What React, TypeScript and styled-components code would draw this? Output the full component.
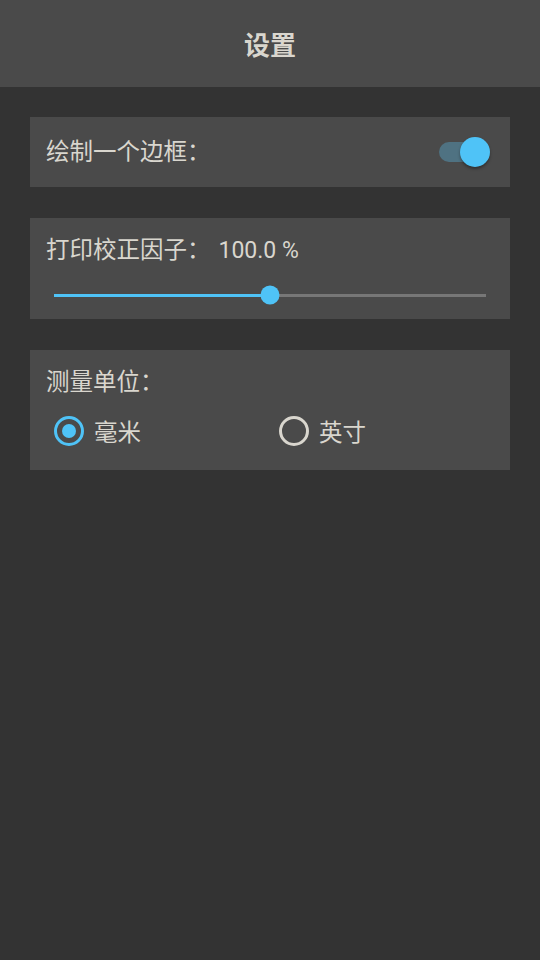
import styled, { createGlobalStyle } from 'styled-components';

const GlobalStyle = createGlobalStyle`
  html, body {
    margin: 0;
    padding: 0;
    background: #333333;
  }
  body {
    font-family: Roboto, "Noto Sans CJK SC", sans-serif;
    color: #d9d6ce;
  }
`;

const Page = styled.div`
  width: 540px;
  min-height: 960px;
  background: #333333;
`;

const Header = styled.header`
  height: 87px;
  background: #4a4a4a;
  display: flex;
  align-items: center;
  justify-content: center;
`;

const Title = styled.h1`
  margin: 0;
  font-size: 26px;
  font-weight: 700;
  color: #d9d6ce;
`;

const Content = styled.main`
  display: flex;
  flex-direction: column;
  gap: 31px;
  padding: 30px 30px;
`;

const Card = styled.section<{ $height: number }>`
  background: #4a4a4a;
  height: ${(p) => p.$height}px;
  box-sizing: border-box;
  padding: 0 16px;
  display: flex;
  flex-direction: column;
`;

const Row = styled.div`
  display: flex;
  align-items: center;
  justify-content: space-between;
  height: 100%;
`;

const Label = styled.span`
  font-size: 23.5px;
  line-height: 30px;
  color: #d9d6ce;
`;

const Value = styled.span`
  font-size: 23px;
  margin-left: 8px;
`;

const Switch = styled.div`
  position: relative;
  width: 51px;
  height: 30px;
  margin-right: 4px;
`;

const Track = styled.div`
  position: absolute;
  left: 0;
  top: 5px;
  width: 42px;
  height: 20px;
  border-radius: 10px;
  background: #4f7282;
`;

const Thumb = styled.div`
  position: absolute;
  right: 0;
  top: 0;
  width: 30px;
  height: 30px;
  border-radius: 50%;
  background: #4fc3f7;
  box-shadow: 0 2px 3px rgba(0, 0, 0, 0.35);
`;

const SliderWrap = styled.div`
  position: relative;
  height: 20px;
  margin: 19px 8px 0 8px;
  display: flex;
  align-items: center;
`;

const SliderTrack = styled.div`
  width: 100%;
  height: 3px;
  background: #777777;
  position: relative;
`;

const SliderFill = styled.div`
  position: absolute;
  left: 0;
  top: 0;
  height: 3px;
  background: #4fc3f7;
`;

const SliderKnob = styled.div`
  position: absolute;
  top: 50%;
  width: 19px;
  height: 19px;
  border-radius: 50%;
  background: #4fc3f7;
  transform: translate(-50%, -50%);
`;

const RadioGroup = styled.div`
  display: flex;
  margin: 17px 0 0 8px;
`;

const RadioOption = styled.label`
  display: flex;
  align-items: center;
  gap: 10px;
  flex: 0 0 225px;
  font-size: 23.5px;
`;

const RadioCircle = styled.span<{ $checked?: boolean }>`
  box-sizing: border-box;
  width: 30px;
  height: 30px;
  border-radius: 50%;
  border: 3px solid ${(p) => (p.$checked ? '#4fc3f7' : '#d9d6ce')};
  display: flex;
  align-items: center;
  justify-content: center;

  &::after {
    content: '';
    display: ${(p) => (p.$checked ? 'block' : 'none')};
    width: 14px;
    height: 14px;
    border-radius: 50%;
    background: #4fc3f7;
  }
`;

const CardLabel = styled(Label)`
  margin-top: 17px;
`;

export default function App() {
  const factor = 0.5;
  return (
    <Page>
      <GlobalStyle />
      <Header>
        <Title>设置</Title>
      </Header>
      <Content>
        <Card $height={70}>
          <Row>
            <Label>绘制一个边框：</Label>
            <Switch>
              <Track />
              <Thumb />
            </Switch>
          </Row>
        </Card>
        <Card $height={101}>
          <CardLabel>
            打印校正因子：<Value>100.0 %</Value>
          </CardLabel>
          <SliderWrap>
            <SliderTrack>
              <SliderFill style={{ width: `${factor * 100}%` }} />
              <SliderKnob style={{ left: `${factor * 100}%` }} />
            </SliderTrack>
          </SliderWrap>
        </Card>
        <Card $height={120}>
          <CardLabel>测量单位：</CardLabel>
          <RadioGroup>
            <RadioOption>
              <RadioCircle $checked />
              毫米
            </RadioOption>
            <RadioOption>
              <RadioCircle />
              英寸
            </RadioOption>
          </RadioGroup>
        </Card>
      </Content>
    </Page>
  );
}
